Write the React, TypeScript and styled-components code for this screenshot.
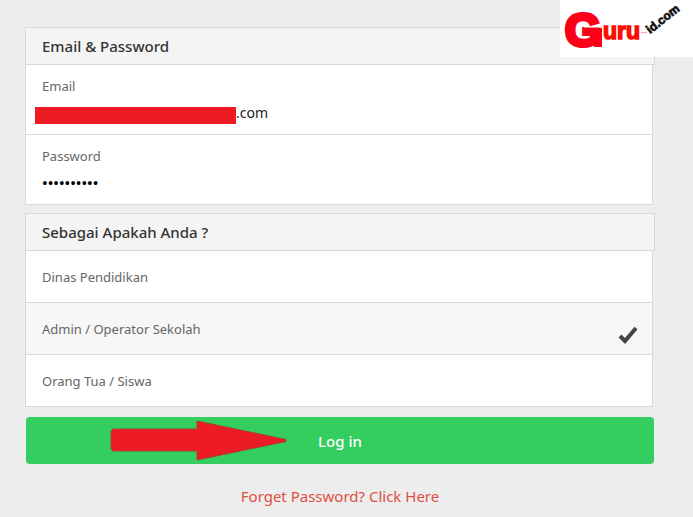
import React, { useState } from "react";
import styled, { createGlobalStyle } from "styled-components";

const GlobalStyle = createGlobalStyle`
  * { box-sizing: border-box; }
  body {
    margin: 0;
    background: #ededed;
    font-family: "Noto Sans", "Open Sans", sans-serif;
    font-size: 13px;
    line-height: 20px;
    color: #666;
  }
`;

const Page = styled.main`
  position: relative;
  padding: 27px 38px 0 25px;
`;

const Brand = styled.a`
  position: absolute;
  top: 0;
  right: 0;
  width: 133px;
  height: 57px;
  background: #fff;
  svg { display: block; }
`;

const Form = styled.form`
  display: flex;
  flex-direction: column;
`;

const Section = styled.section`
  margin-bottom: 8px;
`;

const SectionTitle = styled.h2`
  margin: 0;
  padding: 8px 16px;
  border: 1px solid #d9d9d9;
  background: #f4f4f4;
  color: #333;
  font-size: 15px;
  font-weight: 500;
  line-height: 20px;
`;

const Rows = styled.div`
  margin-right: 2px;
  border: solid #d9d9d9;
  border-width: 0 1px;
`;

const Field = styled.div`
  display: flex;
  flex-direction: column;
  gap: 4px;
  height: 70px;
  padding: 11px 16px 0;
  border-bottom: 1px solid #d9d9d9;
  background: #fff;
`;

const FieldLine = styled.div`
  display: flex;
  align-items: center;
`;

const Redaction = styled.span`
  flex: none;
  width: 201px;
  height: 17px;
  margin: 6px 0 0 -7px;
  background: #ed1c24;
`;

const TextInput = styled.input`
  flex: 1;
  min-width: 0;
  height: 24px;
  padding: 0;
  border: 0;
  outline: 0;
  background: transparent;
  color: #222;
  font: inherit;
  font-size: 14px;
  &[type="password"] { color: #000; font-size: 15px; font-weight: 500; }
`;

const Option = styled.label<{ $selected: boolean }>`
  display: flex;
  align-items: center;
  justify-content: space-between;
  height: 52px;
  padding: 0 14px 0 16px;
  border-bottom: 1px solid #d9d9d9;
  background: ${(p) => (p.$selected ? "#f7f7f7" : "#fff")};
  cursor: pointer;
  svg { margin-top: 12px; }
`;

const Radio = styled.input`
  appearance: none;
  position: absolute;
  width: 0;
  height: 0;
  margin: 0;
`;

const LoginButton = styled.button`
  position: relative;
  height: 47px;
  margin: 2px 1px 0;
  border: 0;
  border-radius: 4px;
  background: #34cd60;
  color: #fff;
  font: inherit;
  font-size: 15px;
  font-weight: 500;
  cursor: pointer;
`;

const Arrow = styled.svg`
  position: absolute;
  top: 3px;
  left: 84px;
`;

const ForgotLink = styled.a`
  align-self: center;
  margin-top: 22px;
  color: #e04f42;
  font-size: 15px;
  text-decoration: none;
`;

const Logo = () => (
  <svg width="133" height="57" viewBox="0 0 133 57" role="img" aria-label="Guru-id.com">
    <g fontFamily="Liberation Sans, Arial, sans-serif" fontWeight="700">
      <text x="5" y="46" fontSize="46" fill="#fc0019" stroke="#fc0019" strokeWidth="4">G</text>
      <path d="M34 28H42V47H34Z" fill="#fc0019" />
      <path d="M24 27H43" stroke="#fff" strokeWidth="1" />
      <text x="43" y="39" fontSize="23" fill="#fc0d06" stroke="#fc0d06" strokeWidth="1.5">uru</text>
      <path d="M81 32.5H87" stroke="#f9a5a5" />
      <text transform="translate(90 34) rotate(-38)" fontSize="12" fill="#111" stroke="#111" strokeWidth=".7">id.com</text>
    </g>
  </svg>
);

const Check = () => (
  <svg width="20" height="18" viewBox="0 0 20 18" aria-hidden="true">
    <path d="M2 10L7 15L18 2" fill="none" stroke="#444" strokeWidth="4" />
  </svg>
);

const roles = ["Dinas Pendidikan", "Admin / Operator Sekolah", "Orang Tua / Siswa"];

export default function App() {
  const [role, setRole] = useState(roles[1]);
  const [email, setEmail] = useState(".com");
  const [password, setPassword] = useState("operator12");

  return (
    <Page>
      <GlobalStyle />
      <Form onSubmit={(e) => e.preventDefault()}>
        <Section>
          <SectionTitle>Email &amp; Password</SectionTitle>
          <Rows>
            <Field>
              <label htmlFor="email">Email</label>
              <FieldLine>
                <Redaction />
                <TextInput id="email" value={email} onChange={(e) => setEmail(e.target.value)} />
              </FieldLine>
            </Field>
            <Field>
              <label htmlFor="password">Password</label>
              <FieldLine>
                <TextInput id="password" type="password" value={password} onChange={(e) => setPassword(e.target.value)} />
              </FieldLine>
            </Field>
          </Rows>
        </Section>
        <Section role="radiogroup" aria-labelledby="role-title">
          <SectionTitle id="role-title">Sebagai Apakah Anda ?</SectionTitle>
          <Rows>
            {roles.map((name) => (
              <Option key={name} $selected={name === role}>
                <Radio type="radio" name="role" checked={name === role} onChange={() => setRole(name)} />
                {name}
                {name === role && <Check />}
              </Option>
            ))}
          </Rows>
        </Section>
        <LoginButton type="submit">
          Log in
          <Arrow width="178" height="41" viewBox="0 0 178 41" aria-hidden="true">
            <path d="M3 9H87V1L176 19.5V21.5L87 40V31H3L1 29V11Z" fill="#ed1c24" stroke="#a5442f" strokeWidth="1" />
          </Arrow>
        </LoginButton>
        <ForgotLink href="#forgot">Forget Password? Click Here</ForgotLink>
      </Form>
      <Brand href="#home"><Logo /></Brand>
    </Page>
  );
}
